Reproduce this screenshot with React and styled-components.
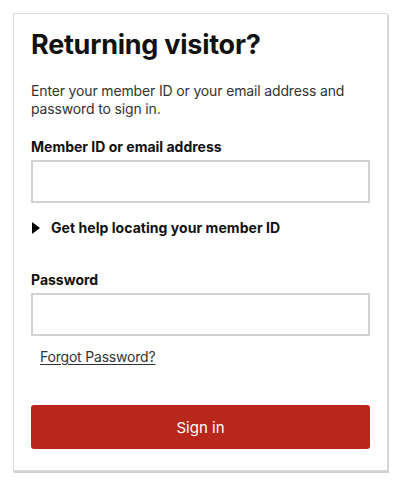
import React from 'react';
import styled, { createGlobalStyle } from 'styled-components';

const fontStack = "Inter, 'Noto Sans', 'Liberation Sans', sans-serif";

const GlobalStyle = createGlobalStyle`
    body {
        margin: 0;
        background: #fff;
        font-family: ${fontStack};
        color: #111;
    }
`;

const Page = styled.div`
    padding: 13px;
`;

const Card = styled.section`
    width: 375px;
    box-sizing: border-box;
    border: 1px solid #dcdcdc;
    box-shadow: 1px 2px 0 #d0d0d0;
    padding: 14px 17px 21px 17px;
`;

const Heading = styled.h1`
    font-size: 27px;
    font-weight: 700;
    line-height: 34px;
    letter-spacing: -0.25px;
    margin: 0 0 20px 0;
    color: #111;
`;

const Intro = styled.p`
    font-size: 14px;
    line-height: 18px;
    letter-spacing: -0.15px;
    color: #333;
    margin: 0 0 20px 0;
`;

const FieldLabel = styled.label`
    display: block;
    font-size: 14px;
    font-weight: 700;
    line-height: 18px;
    margin: ${({ $top }) => $top || 0}px 0 4px 0;
`;

const TextInput = styled.input`
    display: block;
    width: 100%;
    height: 43px;
    box-sizing: border-box;
    border: 2px solid #d2d2d2;
    border-radius: 0;
    padding: 0 10px;
    font-size: 15px;
    font-family: ${fontStack};
    outline: none;
`;

const HelpToggle = styled.div`
    display: flex;
    align-items: center;
    gap: 11px;
    margin-top: 16px;
    font-size: 14px;
    font-weight: 700;
    line-height: 18px;
    letter-spacing: 0.05px;
    cursor: pointer;
`;

const Caret = styled.span`
    width: 0;
    height: 0;
    margin-left: 1px;
    border-top: 6.5px solid transparent;
    border-bottom: 6.5px solid transparent;
    border-left: 8px solid #000;
`;

const ForgotLink = styled.a`
    display: inline-block;
    margin: 12px 0 0 9px;
    font-size: 14px;
    line-height: 18px;
    letter-spacing: -0.2px;
    color: #333;
    text-decoration: underline;
    text-underline-offset: 2px;
`;

const SignInButton = styled.button`
    display: block;
    width: 100%;
    height: 44px;
    margin-top: 39px;
    border: none;
    border-radius: 3px;
    background: #b9271c;
    color: #fff;
    font-family: ${fontStack};
    font-size: 15px;
    cursor: pointer;
`;

export default function App() {
    return (
        <Page>
            <GlobalStyle />
            <Card>
                <Heading>Returning visitor?</Heading>
                <Intro>Enter your member ID or your email address and password to sign in.</Intro>
                <FieldLabel htmlFor="member">Member ID or email address</FieldLabel>
                <TextInput id="member" type="text" />
                <HelpToggle>
                    <Caret />
                    Get help locating your member ID
                </HelpToggle>
                <FieldLabel htmlFor="password" $top={34}>Password</FieldLabel>
                <TextInput id="password" type="password" />
                <ForgotLink href="#">Forgot Password?</ForgotLink>
                <SignInButton>Sign in</SignInButton>
            </Card>
        </Page>
    );
}
